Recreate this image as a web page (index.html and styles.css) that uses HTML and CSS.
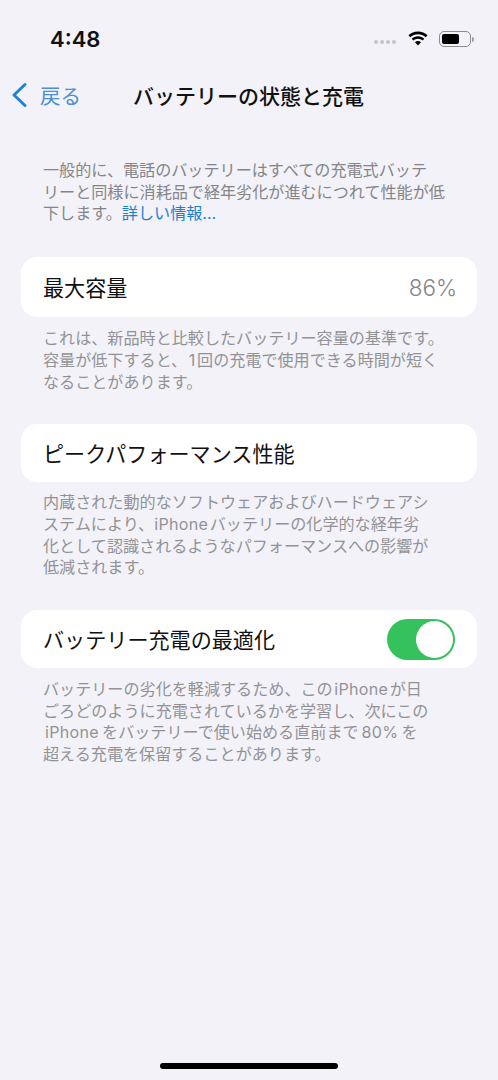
FILE: index.html
```html
<!DOCTYPE html>
<html lang="ja">
<head>
<meta charset="UTF-8" />
<meta name="viewport" content="width=device-width, initial-scale=1" />
<title>バッテリーの状態と充電</title>
<link rel="stylesheet" href="styles.css">
</head>
<body>
<div class="status-bar">
  <span class="time">4:48</span>
  <div class="status-icons">
    <div class="signal"><i></i><i></i><i></i><i></i></div>
    <svg class="wifi" width="22" height="16" viewBox="0 0 22 16">
      <path d="M11 3.200c3 0 5.700 1.200 7.700 3.100l1.900-2C18.100 1.900 14.700.4 11 .4S3.900 1.900 1.400 4.300l1.900 2C5.300 4.400 8 3.200 11 3.200z" fill="#000"/>
      <path d="M11 7.800c1.800 0 3.400.7 4.600 1.800l1.700-1.800C15.600 6.300 13.400 5.300 11 5.300S6.400 6.300 4.700 7.800l1.700 1.800C7.600 8.500 9.200 7.800 11 7.800z" fill="#000"/>
      <path d="M11 10c-1.200 0-2.200.4-3 1.200l3 3.400 3-3.400C13.200 10.400 12.200 10 11 10z" fill="#000"/>
    </svg>
    <div class="battery"><div class="battery-level"></div></div>
    <div class="battery-cap"></div>
  </div>
</div>

<nav class="nav-bar">
  <div class="back">
    <svg width="18" height="26" viewBox="0 0 18 26">
      <path d="M15 2.500 L4 13 L15 23.500" fill="none" stroke="#1c84d8" stroke-width="3" stroke-linecap="round" stroke-linejoin="round"/>
    </svg>
    <span>戻る</span>
  </div>
  <h1>バッテリーの状態と充電</h1>
</nav>

<p class="note intro">一般的に、電話のバッテリーはすべての充電式バッテ<br>リーと同様に消耗品で経年劣化が進むにつれて性能が低<br>下します。<a href="#">詳しい情報...</a></p>

<div class="card card-capacity">
  <span class="card-title">最大容量</span>
  <span class="card-value">86%</span>
</div>
<p class="note">これは、新品時と比較したバッテリー容量の基準です。<br>容量が低下すると、<span class="latin">1</span>回の充電で使用できる時間が短く<br>なることがあります。</p>

<div class="card card-peak">
  <span class="card-title">ピークパフォーマンス性能</span>
</div>
<p class="note">内蔵された動的なソフトウェアおよびハードウェアシ<br>ステムにより、<span class="latin lead">iPhone</span>バッテリーの化学的な経年劣<br>化として認識されるようなパフォーマンスへの影響が<br>低減されます。</p>

<div class="card card-charge">
  <span class="card-title">バッテリー充電の最適化</span>
  <div class="toggle"><div class="knob"></div></div>
</div>
<p class="note note-charge">バッテリーの劣化を軽減するため、この<span class="latin">iPhone</span>が日<br>ごろどのように充電されているかを学習し、次にこの<br><span class="latin wide first">iPhone</span>をバッテリーで使い始める直前まで<span class="latin wide">80%</span>を<br>超える充電を保留することがあります。</p>

<div class="home-indicator"></div>
</body>
</html>
```

FILE: styles.css
```css
html, body {
  margin: 0;
  padding: 0;
}
body {
  position: relative;
  width: 498px;
  height: 1080px;
  overflow: hidden;
  background: #f2f2f8;
  color: #111;
  font-family: Inter, "Noto Sans CJK JP", sans-serif;
}
.status-bar {
  display: flex;
  justify-content: space-between;
  align-items: center;
  height: 34px;
  padding: 22px 24px 0 50px;
}
.time {
  font-size: 22px;
  font-weight: 600;
}
.status-icons {
  display: flex;
  align-items: center;
}
.signal {
  display: flex;
  gap: 2px;
  margin-right: 11px;
  margin-top: 6px;
}
.signal i {
  width: 4px;
  height: 4px;
  border-radius: 50%;
  background: #c4c4c8;
}
.wifi {
  margin-right: 10px;
}
.battery {
  box-sizing: border-box;
  width: 32px;
  height: 16px;
  padding: 2px;
  border: 1px solid #8c8c8e;
  border-radius: 5px;
}
.battery-level {
  width: 17px;
  height: 100%;
  border-radius: 2px;
  background: #000;
}
.battery-cap {
  width: 2px;
  height: 5px;
  margin-left: 1px;
  border-radius: 0 2px 2px 0;
  background: #a0a0a2;
}
.nav-bar {
  display: flex;
  align-items: center;
  height: 40px;
  margin-top: 19px;
  padding-left: 10px;
}
.back {
  display: flex;
  align-items: center;
  gap: 12px;
  width: 123px;
  color: #4a90d2;
  font-size: 20.5px;
}
.nav-bar h1 {
  margin: 0;
  font-size: 21px;
  font-weight: 500;
  color: #111;
}
.note {
  margin: 0 0 0 43px;
  font-size: 16.1px;
  line-height: 21.7px;
  color: #929296;
  white-space: nowrap;
}
.note a {
  color: #1a80d0;
  text-decoration: none;
}
.latin {
  margin: 0 1.5px;
  letter-spacing: 0.3px;
}
.latin.lead {
  margin-left: 0;
}
.latin.wide {
  margin: 0 3px;
}
.latin.first {
  margin-left: 2px;
}
.intro {
  margin-top: 45px;
  color: #858589;
}
.card {
  display: flex;
  justify-content: space-between;
  align-items: center;
  box-sizing: border-box;
  width: 456px;
  height: 60px;
  margin: 0 0 11px 21px;
  padding: 0 22px;
  border-radius: 16px;
  background: #fff;
}
.card-capacity {
  margin-top: 32px;
}
.card-peak {
  margin-top: 31px;
  height: 58px;
  margin-bottom: 10px;
}
.card-charge {
  margin-top: 31px;
  height: 58px;
  margin-bottom: 11px;
}
.note-charge {
  margin-top: 0;
}
.card-title {
  font-size: 21.1px;
  color: #111;
}
.card-value {
  margin-right: -2px;
  font-size: 22.5px;
  font-weight: 300;
  color: #858589;
}
.toggle {
  box-sizing: border-box;
  width: 68px;
  height: 41px;
  padding: 2px;
  border-radius: 21px;
  background: #35c25c;
}
.knob {
  width: 37px;
  height: 37px;
  margin-left: 27px;
  border-radius: 50%;
  background: #fff;
}
.home-indicator {
  position: absolute;
  left: 160px;
  bottom: 11px;
  width: 178px;
  height: 6px;
  border-radius: 3px;
  background: #000;
}
```
